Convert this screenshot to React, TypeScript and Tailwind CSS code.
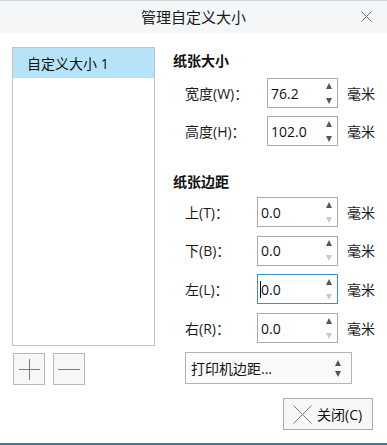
import React from "react";

const FONT = { fontFamily: '"Open Sans", "Noto Sans CJK SC", sans-serif' };

function Spin({ value, width, downDisabled, focused }: { value: string; width: string; downDisabled?: boolean; focused?: boolean }) {
  return (
    <div
      className={`relative flex h-[30px] shrink-0 items-center bg-white border ${focused ? "border-[#3d8fc9]" : "border-[#ababab]"} ${width}`}
    >
      <div className="flex-1 pl-[3px] text-[14px] text-[#111]">{value}</div>
      {focused && <div className="absolute left-[2px] top-[6px] h-[17px] w-[1px] bg-black" />}
      <div className="flex h-full w-[14px] flex-col items-center justify-center gap-[9px] pr-[2px]">
        <svg width="6" height="6" viewBox="0 0 6 6"><path d="M3 0 L6 6 L0 6 Z" fill="#555" /></svg>
        <svg width="6" height="6" viewBox="0 0 6 6"><path d="M0 0 L6 0 L3 6 Z" fill={downDisabled ? "#c9c9c9" : "#555"} /></svg>
      </div>
    </div>
  );
}

function Row({ label, labelW, value, boxW, downDisabled, focused }: { label: string; labelW: string; value: string; boxW: string; downDisabled?: boolean; focused?: boolean }) {
  return (
    <div className="flex h-[30px] items-center whitespace-nowrap pl-[12px]">
      <div className={`${labelW} shrink-0 text-[14px] text-[#1a1a1a]`}>{label}</div>
      <Spin value={value} width={boxW} downDisabled={downDisabled} focused={focused} />
      <div className="ml-[9px] shrink-0 text-[14px] text-[#1a1a1a]">毫米</div>
    </div>
  );
}

export default function App() {
  return (
    <div style={FONT} className="relative flex h-[445px] w-[387px] flex-col overflow-hidden border-t border-[#c9d3da] bg-white">
      <div className="relative flex h-[32px] items-center justify-center bg-[#f5f6f8]">
        <span className="text-[15px] text-[#1a1a1a]">管理自定义大小</span>
        <svg className="absolute right-[15px] top-[10px]" width="11" height="11" viewBox="0 0 11 11">
          <path d="M0.5 0.5 L10.5 10.5 M10.5 0.5 L0.5 10.5" stroke="#6b6b6b" strokeWidth="1" />
        </svg>
      </div>
      <div className="flex flex-1 pt-[14px]">
        <div className="ml-[12px] flex w-[143px] shrink-0 flex-col">
          <div className="h-[299px] border border-[#c3c3c3] bg-white">
            <div className="flex h-[30px] items-center bg-[#b6e3f8] pl-[14px] text-[14px] text-[#111]">自定义大小 1</div>
          </div>
          <div className="mt-[7px] flex gap-[8px] pl-[1px]">
            <div className="flex h-[32px] w-[32px] items-center justify-center border border-[#b9b9b9] bg-[#f7f7f7]">
              <svg width="21" height="21" viewBox="0 0 21 21"><path d="M10.5 0 V21 M0 10.5 H21" stroke="#7d7d7d" strokeWidth="1" /></svg>
            </div>
            <div className="flex h-[32px] w-[32px] items-center justify-center border border-[#b9b9b9] bg-[#f7f7f7]">
              <svg width="22" height="3" viewBox="0 0 22 3"><path d="M0 1.5 H22" stroke="#7d7d7d" strokeWidth="1" /></svg>
            </div>
          </div>
        </div>
        <div className="ml-[18px] flex flex-1 flex-col">
          <div className="flex h-[26px] items-center text-[14px] font-bold text-[#111]">纸张大小</div>
          <div className="mt-[5px] flex flex-col gap-[8px]">
            <Row label="宽度(W)：" labelW="w-[82px]" value="76.2" boxW="w-[71px]" />
            <Row label="高度(H)：" labelW="w-[82px]" value="102.0" boxW="w-[71px]" />
          </div>
          <div className="mt-[22px] flex h-[26px] items-center text-[14px] font-bold text-[#111]">纸张边距</div>
          <div className="mt-[3px] flex flex-col gap-[8.7px]">
            <Row label="上(T)：" labelW="w-[72px]" value="0.0" boxW="w-[81px]" downDisabled />
            <Row label="下(B)：" labelW="w-[72px]" value="0.0" boxW="w-[81px]" downDisabled />
            <Row label="左(L)：" labelW="w-[72px]" value="0.0" boxW="w-[81px]" downDisabled focused />
            <Row label="右(R)：" labelW="w-[72px]" value="0.0" boxW="w-[81px]" downDisabled />
          </div>
          <div className="ml-[12px] mt-[9px] flex h-[32px] w-[167px] items-center border border-[#b4b4b4] bg-[#fafafa] pl-[5px] pr-[10px]">
            <span className="flex-1 text-[14px] text-[#111]">打印机边距...</span>
            <div className="flex flex-col items-center gap-[5px]">
              <svg width="6" height="6" viewBox="0 0 6 6"><path d="M3 0 L6 6 L0 6 Z" fill="#555" /></svg>
              <svg width="6" height="6" viewBox="0 0 6 6"><path d="M0 0 L6 0 L3 6 Z" fill="#555" /></svg>
            </div>
          </div>
          <div className="mt-[14px] flex justify-end pr-[14px]">
            <div className="flex h-[32px] w-[90px] items-center gap-[5px] border border-[#adadad] bg-[#f7f7f7] pl-[9px]">
              <svg width="19" height="19" viewBox="0 0 19 19"><path d="M0.5 0.5 L18.5 18.5 M18.5 0.5 L0.5 18.5" stroke="#7a7a7a" strokeWidth="1" /></svg>
              <span className="text-[14px] text-[#111]">关闭(C)</span>
            </div>
          </div>
        </div>
      </div>
      <div className="h-[2px] bg-[#2f7fa6]" />
    </div>
  );
}
